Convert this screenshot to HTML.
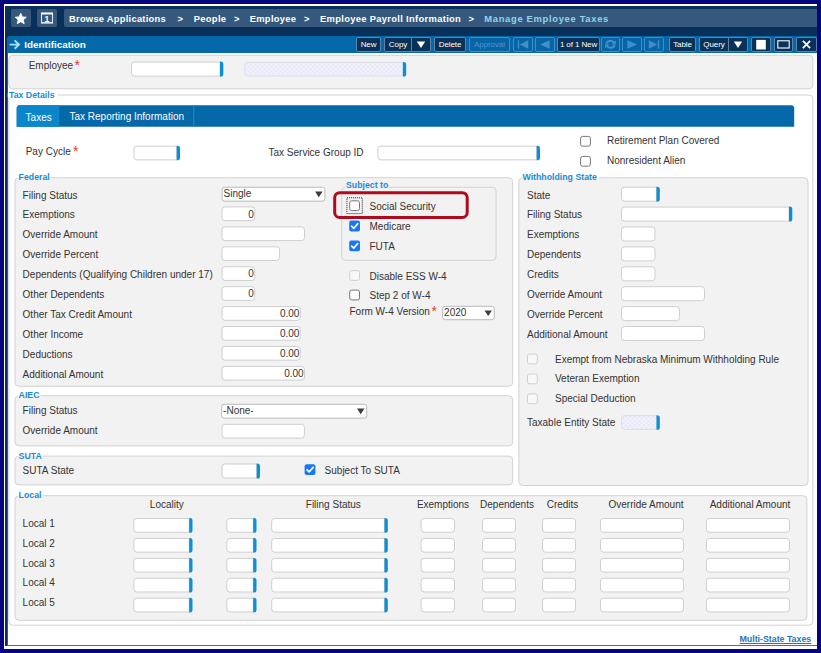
<!DOCTYPE html>
<html><head><meta charset="utf-8"><title>Manage Employee Taxes</title>
<style>
html,body{margin:0;padding:0}
body{width:821px;height:653px;background:#04057f;position:relative;overflow:hidden;font-family:"Liberation Sans",Arial,sans-serif;font-size:10px;color:#333}
div{box-sizing:border-box}
#white{position:absolute;left:4px;top:4px;width:813px;height:645px;background:#fff}
#dark{position:absolute;left:5.4px;top:5.8px;width:811.6px;height:640.5px;background:#083058}
#ibar{position:absolute;left:6.8px;top:36px;width:810.2px;height:17.2px;background:#0568a9;border-radius:3px 0 0 0}
#ileft{position:absolute;left:6.8px;top:53px;width:810.2px;height:592.4px;background:#fff;border-left:1px solid #0568a9}
#botline{position:absolute;left:6.8px;top:644.8px;width:810.2px;height:1.2px;background:#1c7fc0}
#shapes{position:absolute;left:0;top:0}
.hb{position:absolute;background:#36587c;border-radius:2px;overflow:hidden}
.hb svg{display:block}
.t{position:absolute;white-space:nowrap;font-size:10px;height:12px;line-height:12px}
.t.c{text-align:center}
.t.v{text-align:right}
.bc{color:#fff;font-weight:bold;font-size:9.4px}
.bc.cur{color:#8fd6ea}
.nb{position:absolute;top:37px;height:15px;line-height:13px;border:1px solid #5b84ab;background:#0a3157;color:#fff;font-size:8px;text-align:center;border-radius:2px;white-space:nowrap;overflow:hidden;letter-spacing:-0.1px}
.nb.nd{background:#0a64a4;border-color:#3c8dc9;color:#4a98cf}
.lg{color:#1b8cd6;font-weight:bold;font-size:8.75px}
.req{color:#e8391f;font-size:14px;height:14px;line-height:14px}
</style></head>
<body>
<div id="white"></div>
<div id="dark"></div>
<div id="ibar"></div>
<div id="ileft"></div>
<div id="botline"></div>
<svg id="shapes" width="821" height="653" viewBox="0 0 821 653"><defs><pattern id="hatch" width="4.6" height="4.6" patternUnits="userSpaceOnUse"><rect width="4.6" height="4.6" fill="#e5e5f6"/><path d="M0 0 L4.6 4.6 M4.6 0 L0 4.6" stroke="#f5f5fc" stroke-width="1"/></pattern></defs>
<rect x="8.80" y="55.30" width="804.10" height="33.50" rx="4" fill="#f2f2f2" stroke="#d2d2d2" stroke-width="1" />
<path d="M220.00 62.10 H134.50 A3 3 0 0 0 131.50 65.10 V73.10 A3 3 0 0 0 134.50 76.10 H220.00 Z" fill="#fff" stroke="#cfcfcf" stroke-width="1"/>
<path d="M220.00 61.60 H220.70 A2.6 2.6 0 0 1 223.30 64.20 V74.00 A2.6 2.6 0 0 1 220.70 76.60 H220.00 Z" fill="#0b8fd5"/>
<path d="M402.90 62.40 H247.80 A3 3 0 0 0 244.80 65.40 V73.00 A3 3 0 0 0 247.80 76.00 H402.90 Z" fill="url(#hatch)" stroke="#dcdcea" stroke-width="1"/>
<path d="M402.90 61.90 H403.60 A2.6 2.6 0 0 1 406.20 64.50 V73.90 A2.6 2.6 0 0 1 403.60 76.50 H402.90 Z" fill="#0b8fd5"/>
<rect x="8.80" y="95.00" width="804.10" height="530.20" rx="4" fill="#fff" stroke="#d2d2d2" stroke-width="1" />
<rect x="7.8" y="93" width="50" height="4" fill="#fff"/>
<path d="M16.7 126.8 V108 A3 3 0 0 1 19.7 105.2 H791.2 A3 3 0 0 1 794.2 108 V126.8 Z" fill="#0568a9"/>
<path d="M16.7 126.8 V108 A3 3 0 0 1 19.7 105.2 H59.2 V126.8 Z" fill="#0c86cb"/>
<rect x="193.3" y="105.2" width="1" height="21.6" fill="#2f86c0"/>
<path d="M176.70 146.15 H136.90 A3 3 0 0 0 133.90 149.15 V156.85 A3 3 0 0 0 136.90 159.85 H176.70 Z" fill="#fff" stroke="#cfcfcf" stroke-width="1"/>
<path d="M176.70 145.65 H177.40 A2.6 2.6 0 0 1 180.00 148.25 V157.75 A2.6 2.6 0 0 1 177.40 160.35 H176.70 Z" fill="#0b8fd5"/>
<path d="M536.70 146.15 H380.90 A3 3 0 0 0 377.90 149.15 V156.85 A3 3 0 0 0 380.90 159.85 H536.70 Z" fill="#fff" stroke="#cfcfcf" stroke-width="1"/>
<path d="M536.70 145.65 H537.40 A2.6 2.6 0 0 1 540.00 148.25 V157.75 A2.6 2.6 0 0 1 537.40 160.35 H536.70 Z" fill="#0b8fd5"/>
<rect x="580.60" y="136.40" width="9.80" height="9.80" rx="2" fill="#fff" stroke="#777" stroke-width="1" />
<rect x="580.60" y="156.40" width="9.80" height="9.80" rx="2" fill="#fff" stroke="#777" stroke-width="1" />
<rect x="15.00" y="177.70" width="497.70" height="208.60" rx="4" fill="#f2f2f2" stroke="#d2d2d2" stroke-width="1" />
<rect x="17.60" y="176.20" width="33.10" height="1.6" fill="#fff"/>
<rect x="17.60" y="177.70" width="33.10" height="1.2" fill="#f2f2f2"/>
<rect x="222.10" y="187.25" width="102.80" height="13.90" rx="2.5" fill="#fff" stroke="#b9b9b9" stroke-width="1" />
<path d="M315.10 191.60 H322.50 L318.80 197.30 Z" fill="#3c3c3c"/>
<rect x="222.00" y="206.95" width="32.80" height="13.70" rx="3" fill="#fff" stroke="#cfcfcf" stroke-width="1" />
<rect x="222.00" y="226.88" width="82.50" height="13.70" rx="3" fill="#fff" stroke="#cfcfcf" stroke-width="1" />
<rect x="222.00" y="246.81" width="57.50" height="13.70" rx="3" fill="#fff" stroke="#cfcfcf" stroke-width="1" />
<rect x="222.00" y="266.74" width="32.80" height="13.70" rx="3" fill="#fff" stroke="#cfcfcf" stroke-width="1" />
<rect x="222.00" y="286.67" width="32.80" height="13.70" rx="3" fill="#fff" stroke="#cfcfcf" stroke-width="1" />
<rect x="222.00" y="306.60" width="78.30" height="13.70" rx="3" fill="#fff" stroke="#cfcfcf" stroke-width="1" />
<rect x="222.00" y="326.53" width="78.30" height="13.70" rx="3" fill="#fff" stroke="#cfcfcf" stroke-width="1" />
<rect x="222.00" y="346.46" width="78.30" height="13.70" rx="3" fill="#fff" stroke="#cfcfcf" stroke-width="1" />
<rect x="222.00" y="366.39" width="82.50" height="13.70" rx="3" fill="#fff" stroke="#cfcfcf" stroke-width="1" />
<rect x="341.70" y="187.30" width="154.40" height="73.00" rx="4" fill="#f2f2f2" stroke="#d2d2d2" stroke-width="1" />
<rect x="345.00" y="185.80" width="44.10" height="1.6" fill="#f2f2f2"/>
<rect x="345.00" y="187.30" width="44.10" height="1.2" fill="#f2f2f2"/>
<rect x="346.9" y="197.8" width="15.4" height="15.8" fill="none" stroke="#222" stroke-width="1" stroke-dasharray="1 1"/>
<rect x="349.70" y="200.80" width="9.80" height="9.80" rx="2" fill="#fff" stroke="#777" stroke-width="1" />
<rect x="349.20" y="220.60" width="10.80" height="10.80" rx="2" fill="#1877f2" />
<path d="M351.63 226.27 L353.70 228.34 L357.75 223.75" fill="none" stroke="#fff" stroke-width="1.7" stroke-linecap="round" stroke-linejoin="round"/>
<rect x="349.20" y="240.40" width="10.80" height="10.80" rx="2" fill="#1877f2" />
<path d="M351.63 246.07 L353.70 248.14 L357.75 243.55" fill="none" stroke="#fff" stroke-width="1.7" stroke-linecap="round" stroke-linejoin="round"/>
<rect x="334.7" y="192.7" width="132.5" height="24.8" rx="5" fill="none" stroke="#b00a1e" stroke-width="3"/>
<rect x="349.70" y="270.60" width="9.80" height="9.80" rx="2" fill="#f8f8f8" stroke="#d0d0d0" stroke-width="1" />
<rect x="349.70" y="290.10" width="9.80" height="9.80" rx="2" fill="#fff" stroke="#777" stroke-width="1" />
<rect x="442.70" y="306.30" width="51.60" height="13.40" rx="2.5" fill="#fff" stroke="#b9b9b9" stroke-width="1" />
<path d="M484.50 310.40 H491.90 L488.20 316.10 Z" fill="#3c3c3c"/>
<rect x="518.90" y="177.70" width="289.10" height="307.80" rx="4" fill="#f2f2f2" stroke="#d2d2d2" stroke-width="1" />
<rect x="521.50" y="176.20" width="77.60" height="1.6" fill="#fff"/>
<rect x="521.50" y="177.70" width="77.60" height="1.2" fill="#f2f2f2"/>
<path d="M656.50 187.20 H624.50 A3 3 0 0 0 621.50 190.20 V198.20 A3 3 0 0 0 624.50 201.20 H656.50 Z" fill="#fff" stroke="#cfcfcf" stroke-width="1"/>
<path d="M656.50 186.70 H657.20 A2.6 2.6 0 0 1 659.80 189.30 V199.10 A2.6 2.6 0 0 1 657.20 201.70 H656.50 Z" fill="#0b8fd5"/>
<path d="M789.00 207.10 H624.50 A3 3 0 0 0 621.50 210.10 V218.10 A3 3 0 0 0 624.50 221.10 H789.00 Z" fill="#fff" stroke="#cfcfcf" stroke-width="1"/>
<path d="M789.00 206.60 H789.70 A2.6 2.6 0 0 1 792.30 209.20 V219.00 A2.6 2.6 0 0 1 789.70 221.60 H789.00 Z" fill="#0b8fd5"/>
<rect x="621.50" y="227.00" width="33.50" height="14.00" rx="3" fill="#fff" stroke="#cfcfcf" stroke-width="1" />
<rect x="621.50" y="246.90" width="33.50" height="14.00" rx="3" fill="#fff" stroke="#cfcfcf" stroke-width="1" />
<rect x="621.50" y="266.80" width="33.50" height="14.00" rx="3" fill="#fff" stroke="#cfcfcf" stroke-width="1" />
<rect x="621.50" y="286.70" width="83.00" height="14.00" rx="3" fill="#fff" stroke="#cfcfcf" stroke-width="1" />
<rect x="621.50" y="306.60" width="58.00" height="14.00" rx="3" fill="#fff" stroke="#cfcfcf" stroke-width="1" />
<rect x="621.50" y="326.50" width="83.00" height="14.00" rx="3" fill="#fff" stroke="#cfcfcf" stroke-width="1" />
<rect x="527.50" y="354.10" width="9.80" height="9.80" rx="2" fill="#f8f8f8" stroke="#d0d0d0" stroke-width="1" />
<rect x="527.50" y="374.00" width="9.80" height="9.80" rx="2" fill="#f8f8f8" stroke="#d0d0d0" stroke-width="1" />
<rect x="527.50" y="393.90" width="9.80" height="9.80" rx="2" fill="#f8f8f8" stroke="#d0d0d0" stroke-width="1" />
<path d="M656.50 415.65 H624.50 A3 3 0 0 0 621.50 418.65 V426.35 A3 3 0 0 0 624.50 429.35 H656.50 Z" fill="url(#hatch)" stroke="#dcdcea" stroke-width="1"/>
<path d="M656.50 415.15 H657.20 A2.6 2.6 0 0 1 659.80 417.75 V427.25 A2.6 2.6 0 0 1 657.20 429.85 H656.50 Z" fill="#0b8fd5"/>
<rect x="15.00" y="395.70" width="497.70" height="50.20" rx="4" fill="#f2f2f2" stroke="#d2d2d2" stroke-width="1" />
<rect x="17.60" y="394.20" width="23.10" height="1.6" fill="#fff"/>
<rect x="17.60" y="395.70" width="23.10" height="1.2" fill="#f2f2f2"/>
<rect x="221.70" y="404.25" width="145.10" height="13.90" rx="2.5" fill="#fff" stroke="#b9b9b9" stroke-width="1" />
<path d="M357.00 408.60 H364.40 L360.70 414.30 Z" fill="#3c3c3c"/>
<rect x="222.00" y="424.35" width="82.40" height="13.70" rx="3" fill="#fff" stroke="#cfcfcf" stroke-width="1" />
<rect x="15.00" y="456.10" width="497.70" height="28.80" rx="4" fill="#f2f2f2" stroke="#d2d2d2" stroke-width="1" />
<rect x="17.60" y="454.60" width="24.60" height="1.6" fill="#fff"/>
<rect x="17.60" y="456.10" width="24.60" height="1.2" fill="#f2f2f2"/>
<path d="M256.70 464.00 H225.00 A3 3 0 0 0 222.00 467.00 V475.00 A3 3 0 0 0 225.00 478.00 H256.70 Z" fill="#fff" stroke="#cfcfcf" stroke-width="1"/>
<path d="M256.70 463.50 H257.40 A2.6 2.6 0 0 1 260.00 466.10 V475.90 A2.6 2.6 0 0 1 257.40 478.50 H256.70 Z" fill="#0b8fd5"/>
<rect x="304.60" y="464.20" width="10.80" height="10.80" rx="2" fill="#1877f2" />
<path d="M307.03 469.87 L309.10 471.94 L313.15 467.35" fill="none" stroke="#fff" stroke-width="1.7" stroke-linecap="round" stroke-linejoin="round"/>
<rect x="15.00" y="495.70" width="791.90" height="124.60" rx="4" fill="#f2f2f2" stroke="#d2d2d2" stroke-width="1" />
<rect x="17.60" y="494.20" width="25.60" height="1.6" fill="#fff"/>
<rect x="17.60" y="495.70" width="25.60" height="1.2" fill="#f2f2f2"/>
<path d="M189.20 518.55 H136.80 A3 3 0 0 0 133.80 521.55 V529.25 A3 3 0 0 0 136.80 532.25 H189.20 Z" fill="#fff" stroke="#cfcfcf" stroke-width="1"/>
<path d="M189.20 518.05 H189.90 A2.6 2.6 0 0 1 192.50 520.65 V530.15 A2.6 2.6 0 0 1 189.90 532.75 H189.20 Z" fill="#0b8fd5"/>
<path d="M253.20 518.55 H229.80 A3 3 0 0 0 226.80 521.55 V529.25 A3 3 0 0 0 229.80 532.25 H253.20 Z" fill="#fff" stroke="#cfcfcf" stroke-width="1"/>
<path d="M253.20 518.05 H253.90 A2.6 2.6 0 0 1 256.50 520.65 V530.15 A2.6 2.6 0 0 1 253.90 532.75 H253.20 Z" fill="#0b8fd5"/>
<path d="M384.50 518.55 H274.70 A3 3 0 0 0 271.70 521.55 V529.25 A3 3 0 0 0 274.70 532.25 H384.50 Z" fill="#fff" stroke="#cfcfcf" stroke-width="1"/>
<path d="M384.50 518.05 H385.20 A2.6 2.6 0 0 1 387.80 520.65 V530.15 A2.6 2.6 0 0 1 385.20 532.75 H384.50 Z" fill="#0b8fd5"/>
<rect x="421.10" y="518.55" width="33.40" height="13.70" rx="3" fill="#fff" stroke="#cfcfcf" stroke-width="1" />
<rect x="482.50" y="518.55" width="33.00" height="13.70" rx="3" fill="#fff" stroke="#cfcfcf" stroke-width="1" />
<rect x="542.50" y="518.55" width="33.00" height="13.70" rx="3" fill="#fff" stroke="#cfcfcf" stroke-width="1" />
<rect x="600.50" y="518.55" width="83.00" height="13.70" rx="3" fill="#fff" stroke="#cfcfcf" stroke-width="1" />
<rect x="706.40" y="518.55" width="83.10" height="13.70" rx="3" fill="#fff" stroke="#cfcfcf" stroke-width="1" />
<path d="M189.20 538.47 H136.80 A3 3 0 0 0 133.80 541.47 V549.17 A3 3 0 0 0 136.80 552.17 H189.20 Z" fill="#fff" stroke="#cfcfcf" stroke-width="1"/>
<path d="M189.20 537.97 H189.90 A2.6 2.6 0 0 1 192.50 540.57 V550.07 A2.6 2.6 0 0 1 189.90 552.67 H189.20 Z" fill="#0b8fd5"/>
<path d="M253.20 538.47 H229.80 A3 3 0 0 0 226.80 541.47 V549.17 A3 3 0 0 0 229.80 552.17 H253.20 Z" fill="#fff" stroke="#cfcfcf" stroke-width="1"/>
<path d="M253.20 537.97 H253.90 A2.6 2.6 0 0 1 256.50 540.57 V550.07 A2.6 2.6 0 0 1 253.90 552.67 H253.20 Z" fill="#0b8fd5"/>
<path d="M384.50 538.47 H274.70 A3 3 0 0 0 271.70 541.47 V549.17 A3 3 0 0 0 274.70 552.17 H384.50 Z" fill="#fff" stroke="#cfcfcf" stroke-width="1"/>
<path d="M384.50 537.97 H385.20 A2.6 2.6 0 0 1 387.80 540.57 V550.07 A2.6 2.6 0 0 1 385.20 552.67 H384.50 Z" fill="#0b8fd5"/>
<rect x="421.10" y="538.47" width="33.40" height="13.70" rx="3" fill="#fff" stroke="#cfcfcf" stroke-width="1" />
<rect x="482.50" y="538.47" width="33.00" height="13.70" rx="3" fill="#fff" stroke="#cfcfcf" stroke-width="1" />
<rect x="542.50" y="538.47" width="33.00" height="13.70" rx="3" fill="#fff" stroke="#cfcfcf" stroke-width="1" />
<rect x="600.50" y="538.47" width="83.00" height="13.70" rx="3" fill="#fff" stroke="#cfcfcf" stroke-width="1" />
<rect x="706.40" y="538.47" width="83.10" height="13.70" rx="3" fill="#fff" stroke="#cfcfcf" stroke-width="1" />
<path d="M189.20 558.39 H136.80 A3 3 0 0 0 133.80 561.39 V569.09 A3 3 0 0 0 136.80 572.09 H189.20 Z" fill="#fff" stroke="#cfcfcf" stroke-width="1"/>
<path d="M189.20 557.89 H189.90 A2.6 2.6 0 0 1 192.50 560.49 V569.99 A2.6 2.6 0 0 1 189.90 572.59 H189.20 Z" fill="#0b8fd5"/>
<path d="M253.20 558.39 H229.80 A3 3 0 0 0 226.80 561.39 V569.09 A3 3 0 0 0 229.80 572.09 H253.20 Z" fill="#fff" stroke="#cfcfcf" stroke-width="1"/>
<path d="M253.20 557.89 H253.90 A2.6 2.6 0 0 1 256.50 560.49 V569.99 A2.6 2.6 0 0 1 253.90 572.59 H253.20 Z" fill="#0b8fd5"/>
<path d="M384.50 558.39 H274.70 A3 3 0 0 0 271.70 561.39 V569.09 A3 3 0 0 0 274.70 572.09 H384.50 Z" fill="#fff" stroke="#cfcfcf" stroke-width="1"/>
<path d="M384.50 557.89 H385.20 A2.6 2.6 0 0 1 387.80 560.49 V569.99 A2.6 2.6 0 0 1 385.20 572.59 H384.50 Z" fill="#0b8fd5"/>
<rect x="421.10" y="558.39" width="33.40" height="13.70" rx="3" fill="#fff" stroke="#cfcfcf" stroke-width="1" />
<rect x="482.50" y="558.39" width="33.00" height="13.70" rx="3" fill="#fff" stroke="#cfcfcf" stroke-width="1" />
<rect x="542.50" y="558.39" width="33.00" height="13.70" rx="3" fill="#fff" stroke="#cfcfcf" stroke-width="1" />
<rect x="600.50" y="558.39" width="83.00" height="13.70" rx="3" fill="#fff" stroke="#cfcfcf" stroke-width="1" />
<rect x="706.40" y="558.39" width="83.10" height="13.70" rx="3" fill="#fff" stroke="#cfcfcf" stroke-width="1" />
<path d="M189.20 578.31 H136.80 A3 3 0 0 0 133.80 581.31 V589.01 A3 3 0 0 0 136.80 592.01 H189.20 Z" fill="#fff" stroke="#cfcfcf" stroke-width="1"/>
<path d="M189.20 577.81 H189.90 A2.6 2.6 0 0 1 192.50 580.41 V589.91 A2.6 2.6 0 0 1 189.90 592.51 H189.20 Z" fill="#0b8fd5"/>
<path d="M253.20 578.31 H229.80 A3 3 0 0 0 226.80 581.31 V589.01 A3 3 0 0 0 229.80 592.01 H253.20 Z" fill="#fff" stroke="#cfcfcf" stroke-width="1"/>
<path d="M253.20 577.81 H253.90 A2.6 2.6 0 0 1 256.50 580.41 V589.91 A2.6 2.6 0 0 1 253.90 592.51 H253.20 Z" fill="#0b8fd5"/>
<path d="M384.50 578.31 H274.70 A3 3 0 0 0 271.70 581.31 V589.01 A3 3 0 0 0 274.70 592.01 H384.50 Z" fill="#fff" stroke="#cfcfcf" stroke-width="1"/>
<path d="M384.50 577.81 H385.20 A2.6 2.6 0 0 1 387.80 580.41 V589.91 A2.6 2.6 0 0 1 385.20 592.51 H384.50 Z" fill="#0b8fd5"/>
<rect x="421.10" y="578.31" width="33.40" height="13.70" rx="3" fill="#fff" stroke="#cfcfcf" stroke-width="1" />
<rect x="482.50" y="578.31" width="33.00" height="13.70" rx="3" fill="#fff" stroke="#cfcfcf" stroke-width="1" />
<rect x="542.50" y="578.31" width="33.00" height="13.70" rx="3" fill="#fff" stroke="#cfcfcf" stroke-width="1" />
<rect x="600.50" y="578.31" width="83.00" height="13.70" rx="3" fill="#fff" stroke="#cfcfcf" stroke-width="1" />
<rect x="706.40" y="578.31" width="83.10" height="13.70" rx="3" fill="#fff" stroke="#cfcfcf" stroke-width="1" />
<path d="M189.20 598.23 H136.80 A3 3 0 0 0 133.80 601.23 V608.93 A3 3 0 0 0 136.80 611.93 H189.20 Z" fill="#fff" stroke="#cfcfcf" stroke-width="1"/>
<path d="M189.20 597.73 H189.90 A2.6 2.6 0 0 1 192.50 600.33 V609.83 A2.6 2.6 0 0 1 189.90 612.43 H189.20 Z" fill="#0b8fd5"/>
<path d="M253.20 598.23 H229.80 A3 3 0 0 0 226.80 601.23 V608.93 A3 3 0 0 0 229.80 611.93 H253.20 Z" fill="#fff" stroke="#cfcfcf" stroke-width="1"/>
<path d="M253.20 597.73 H253.90 A2.6 2.6 0 0 1 256.50 600.33 V609.83 A2.6 2.6 0 0 1 253.90 612.43 H253.20 Z" fill="#0b8fd5"/>
<path d="M384.50 598.23 H274.70 A3 3 0 0 0 271.70 601.23 V608.93 A3 3 0 0 0 274.70 611.93 H384.50 Z" fill="#fff" stroke="#cfcfcf" stroke-width="1"/>
<path d="M384.50 597.73 H385.20 A2.6 2.6 0 0 1 387.80 600.33 V609.83 A2.6 2.6 0 0 1 385.20 612.43 H384.50 Z" fill="#0b8fd5"/>
<rect x="421.10" y="598.23" width="33.40" height="13.70" rx="3" fill="#fff" stroke="#cfcfcf" stroke-width="1" />
<rect x="482.50" y="598.23" width="33.00" height="13.70" rx="3" fill="#fff" stroke="#cfcfcf" stroke-width="1" />
<rect x="542.50" y="598.23" width="33.00" height="13.70" rx="3" fill="#fff" stroke="#cfcfcf" stroke-width="1" />
<rect x="600.50" y="598.23" width="83.00" height="13.70" rx="3" fill="#fff" stroke="#cfcfcf" stroke-width="1" />
<rect x="706.40" y="598.23" width="83.10" height="13.70" rx="3" fill="#fff" stroke="#cfcfcf" stroke-width="1" />
</svg>
<div class="hb" style="left:11px;top:9.2px;width:19.5px;height:18.2px"><svg width="19.5" height="18.2" viewBox="0 0 19.5 18.2"><path d="M9.75 4.2 L11.35 7.9 L15.3 8.25 L12.3 10.85 L13.2 14.7 L9.75 12.65 L6.3 14.7 L7.2 10.85 L4.2 8.25 L8.15 7.9 Z" fill="#fff" stroke="#fff" stroke-width="0.9" stroke-linejoin="round"/></svg></div>
<div class="hb" style="left:37.2px;top:9.2px;width:19.8px;height:18.2px"><svg width="19.8" height="18.2" viewBox="0 0 19.8 18.2"><rect x="4.5" y="4.2" width="11" height="9.6" fill="none" stroke="#dfe6ee" stroke-width="1.1"/><rect x="4" y="3.6" width="12" height="1.9" fill="#f4f7fa"/><rect x="4" y="13.4" width="12" height="1" fill="#f4f7fa"/><text x="10" y="12.9" font-size="8.6" font-weight="bold" fill="#fff" text-anchor="middle" font-family="Liberation Sans, sans-serif">1</text></svg></div>
<div class="hb" style="left:64px;top:9.2px;width:753px;height:18.2px;border-radius:2px 0 0 2px"></div>
<div class="t bc " style="left:69px;top:13.3px;letter-spacing:0.239px">Browse Applications</div>
<div class="t bc " style="left:177.5px;top:13.3px;letter-spacing:0.000px">&gt;</div>
<div class="t bc " style="left:193.7px;top:13.3px;letter-spacing:0.324px">People</div>
<div class="t bc " style="left:234px;top:13.3px;letter-spacing:0.000px">&gt;</div>
<div class="t bc " style="left:249.7px;top:13.3px;letter-spacing:0.294px">Employee</div>
<div class="t bc " style="left:304px;top:13.3px;letter-spacing:0.000px">&gt;</div>
<div class="t bc " style="left:320px;top:13.3px;letter-spacing:0.315px">Employee Payroll Information</div>
<div class="t bc " style="left:468.5px;top:13.3px;letter-spacing:0.000px">&gt;</div>
<div class="t bc cur" style="left:484.3px;top:13.3px;letter-spacing:0.684px">Manage Employee Taxes</div>
<svg style="position:absolute;left:8.8px;top:39px" width="12" height="11" viewBox="0 0 12 11"><path d="M0.6 5.6 H9.8 M5.6 1.4 L10 5.6 L5.6 9.8" fill="none" stroke="#a8e4f0" stroke-width="1.9"/></svg>
<div class="t" style="left:24.3px;top:38.5px;color:#fff;font-weight:bold;font-size:9.9px">Identification</div>
<div class="nb" style="left:356.0px;width:25.0px">New</div>
<div class="nb" style="left:384.0px;width:28.0px;border-radius:2px 0 0 2px">Copy</div>
<div class="nb" style="left:411.0px;width:20.0px;border-radius:0 2px 2px 0"><svg width="20.0" height="15" viewBox="0 0 20.0 15" style="position:absolute;left:-1px;top:-1px"><path d="M5.8 4.4 H14.2 L10.0 11 Z" fill="#fff"/></svg></div>
<div class="nb" style="left:434.0px;width:32.0px">Delete</div>
<div class="nb nd" style="left:469.0px;width:41.0px">Approval</div>
<div class="nb nd" style="left:513.0px;width:20.0px"><svg width="20.0" height="15" viewBox="0 0 20.0 15" style="position:absolute;left:-1px;top:-1px"><rect x="4.8" y="3.3" width="1.4" height="8.4" fill="#3f8fc8"/><path d="M15.2 3.3 V11.7 L6.8 7.5 Z" fill="#3f8fc8"/></svg></div>
<div class="nb nd" style="left:535.0px;width:20.0px"><svg width="20.0" height="15" viewBox="0 0 20.0 15" style="position:absolute;left:-1px;top:-1px"><path d="M14.6 3.3 V11.7 L5.0 7.5 Z" fill="#3f8fc8"/></svg></div>
<div class="nb" style="left:557.0px;width:43.0px">1 of 1 New</div>
<div class="nb nd" style="left:601.0px;width:19.0px"><svg width="19.0" height="15" viewBox="0 0 19.0 15" style="position:absolute;left:-1px;top:-1px"><g transform="translate(0.25,0)"><path d="M4.2 6.8 A5 4.2 0 0 1 13.2 4.6 L14.6 3.4 V7.4 H10.2 L11.8 5.9 A3.2 2.6 0 0 0 6.4 6.8 Z M14.3 7.9 A5 4.2 0 0 1 5.3 10.1 L3.9 11.3 V7.3 H8.3 L6.7 8.8 A3.2 2.6 0 0 0 12.1 7.9 Z" fill="#3f8fc8"/></g></svg></div>
<div class="nb nd" style="left:622.0px;width:20.0px"><svg width="20.0" height="15" viewBox="0 0 20.0 15" style="position:absolute;left:-1px;top:-1px"><path d="M5.4 3.3 V11.7 L15.0 7.5 Z" fill="#3f8fc8"/></svg></div>
<div class="nb nd" style="left:644.0px;width:20.0px"><svg width="20.0" height="15" viewBox="0 0 20.0 15" style="position:absolute;left:-1px;top:-1px"><rect x="13.8" y="3.3" width="1.4" height="8.4" fill="#3f8fc8"/><path d="M4.8 3.3 V11.7 L13.2 7.5 Z" fill="#3f8fc8"/></svg></div>
<div class="nb" style="left:669.0px;width:27.0px">Table</div>
<div class="nb" style="left:699.0px;width:30.0px;border-radius:2px 0 0 2px">Query</div>
<div class="nb" style="left:728.0px;width:20.0px;border-radius:0 2px 2px 0"><svg width="20.0" height="15" viewBox="0 0 20.0 15" style="position:absolute;left:-1px;top:-1px"><path d="M5.8 4.4 H14.2 L10.0 11 Z" fill="#fff"/></svg></div>
<div class="nb" style="left:751.0px;width:20.0px"><svg width="20.0" height="15" viewBox="0 0 20.0 15" style="position:absolute;left:-1px;top:-1px"><rect x="5.2" y="2.9" width="9.6" height="9.6" fill="#fff"/></svg></div>
<div class="nb" style="left:774.0px;width:19.0px"><svg width="19.0" height="15" viewBox="0 0 19.0 15" style="position:absolute;left:-1px;top:-1px"><rect x="3.8" y="3.8" width="11.4" height="7.2" fill="none" stroke="#fff" stroke-width="1.1"/></svg></div>
<div class="nb" style="left:796.0px;width:21.0px"><svg width="21.0" height="15" viewBox="0 0 21.0 15" style="position:absolute;left:-1px;top:-1px"><path d="M6.9 3.9 L14.1 11.1 M14.1 3.9 L6.9 11.1" stroke="#fff" stroke-width="1.8" fill="none"/></svg></div>
<div class="t " style="left:28.7px;top:60.00px;">Employee</div>
<div class="t req" style="left:74.5px;top:58.10px">*</div>
<div class="t lg" style="left:9px;top:88.8px">Tax Details</div>
<div class="t " style="left:25.6px;top:112.00px;color:#fff">Taxes</div>
<div class="t " style="left:69.5px;top:111.20px;color:#fff">Tax Reporting Information</div>
<div class="t " style="left:25.7px;top:146.00px;">Pay Cycle</div>
<div class="t req" style="left:73px;top:143.60px">*</div>
<div class="t " style="left:268.5px;top:146.50px;">Tax Service Group ID</div>
<div class="t " style="left:607px;top:135.30px;">Retirement Plan Covered</div>
<div class="t " style="left:607px;top:154.50px;">Nonresident Alien</div>
<div class="t lg" style="left:18.60px;top:171.20px">Federal</div>
<div class="t " style="left:22.6px;top:189.50px;">Filing Status</div>
<div class="t " style="left:22.6px;top:209.43px;">Exemptions</div>
<div class="t " style="left:22.6px;top:229.36px;">Override Amount</div>
<div class="t " style="left:22.6px;top:249.29px;">Override Percent</div>
<div class="t " style="left:22.6px;top:269.22px;">Dependents (Qualifying Children under 17)</div>
<div class="t " style="left:22.6px;top:289.15px;">Other Dependents</div>
<div class="t " style="left:22.6px;top:309.08px;">Other Tax Credit Amount</div>
<div class="t " style="left:22.6px;top:329.01px;">Other Income</div>
<div class="t " style="left:22.6px;top:348.94px;">Deductions</div>
<div class="t " style="left:22.6px;top:368.87px;">Additional Amount</div>
<div class="t" style="left:223.50px;top:187.80px">Single</div>
<div class="t v" style="left:221.50px;width:32.40px;top:208.70px">0</div>
<div class="t v" style="left:221.50px;width:32.40px;top:268.49px">0</div>
<div class="t v" style="left:221.50px;width:32.40px;top:288.42px">0</div>
<div class="t v" style="left:221.50px;width:77.90px;top:308.35px">0.00</div>
<div class="t v" style="left:221.50px;width:77.90px;top:328.28px">0.00</div>
<div class="t v" style="left:221.50px;width:77.90px;top:348.21px">0.00</div>
<div class="t v" style="left:221.50px;width:82.10px;top:368.14px">0.00</div>
<div class="t lg" style="left:346.00px;top:179.30px">Subject to</div>
<div class="t " style="left:369.5px;top:200.70px;">Social Security</div>
<div class="t " style="left:369.5px;top:220.70px;">Medicare</div>
<div class="t " style="left:369.5px;top:240.70px;">FUTA</div>
<div class="t " style="left:369.5px;top:270.70px;">Disable ESS W-4</div>
<div class="t " style="left:369.5px;top:290.00px;">Step 2 of W-4</div>
<div class="t " style="left:349.5px;top:306.30px;">Form W-4 Version</div>
<div class="t req" style="left:431.5px;top:303.90px">*</div>
<div class="t" style="left:444.10px;top:306.60px">2020</div>
<div class="t lg" style="left:522.50px;top:171.20px">Withholding State</div>
<div class="t " style="left:527px;top:189.50px;">State</div>
<div class="t " style="left:527px;top:209.40px;">Filing Status</div>
<div class="t " style="left:527px;top:229.30px;">Exemptions</div>
<div class="t " style="left:527px;top:249.20px;">Dependents</div>
<div class="t " style="left:527px;top:269.10px;">Credits</div>
<div class="t " style="left:527px;top:289.00px;">Override Amount</div>
<div class="t " style="left:527px;top:308.90px;">Override Percent</div>
<div class="t " style="left:527px;top:328.80px;">Additional Amount</div>
<div class="t " style="left:555px;top:353.50px;">Exempt from Nebraska Minimum Withholding Rule</div>
<div class="t " style="left:555px;top:373.40px;">Veteran Exemption</div>
<div class="t " style="left:555px;top:393.30px;">Special Deduction</div>
<div class="t " style="left:527px;top:416.70px;">Taxable Entity State</div>
<div class="t lg" style="left:18.60px;top:389.20px">AIEC</div>
<div class="t " style="left:22.6px;top:405.00px;">Filing Status</div>
<div class="t" style="left:223.10px;top:404.80px">-None-</div>
<div class="t " style="left:22.6px;top:425.00px;">Override Amount</div>
<div class="t lg" style="left:18.60px;top:449.60px">SUTA</div>
<div class="t " style="left:22.6px;top:464.90px;">SUTA State</div>
<div class="t " style="left:324.6px;top:464.70px;">Subject To SUTA</div>
<div class="t lg" style="left:18.60px;top:489.20px">Local</div>
<div class="t c" style="left:106.80px;width:120px;top:499.40px">Locality</div>
<div class="t c" style="left:273.30px;width:120px;top:499.40px">Filing Status</div>
<div class="t c" style="left:383.00px;width:120px;top:499.40px">Exemptions</div>
<div class="t c" style="left:447.00px;width:120px;top:499.40px">Dependents</div>
<div class="t c" style="left:502.50px;width:120px;top:499.40px">Credits</div>
<div class="t c" style="left:586.00px;width:120px;top:499.40px">Override Amount</div>
<div class="t c" style="left:690.00px;width:120px;top:499.40px">Additional Amount</div>
<div class="t " style="left:22.6px;top:517.70px;">Local 1</div>
<div class="t " style="left:22.6px;top:537.60px;">Local 2</div>
<div class="t " style="left:22.6px;top:557.50px;">Local 3</div>
<div class="t " style="left:22.6px;top:577.40px;">Local 4</div>
<div class="t " style="left:22.6px;top:597.30px;">Local 5</div>
<div class="t" style="left:739.5px;top:633.2px;color:#2474b8;font-weight:bold;font-size:8.8px;text-decoration:underline">Multi-State Taxes</div>
</body></html>
